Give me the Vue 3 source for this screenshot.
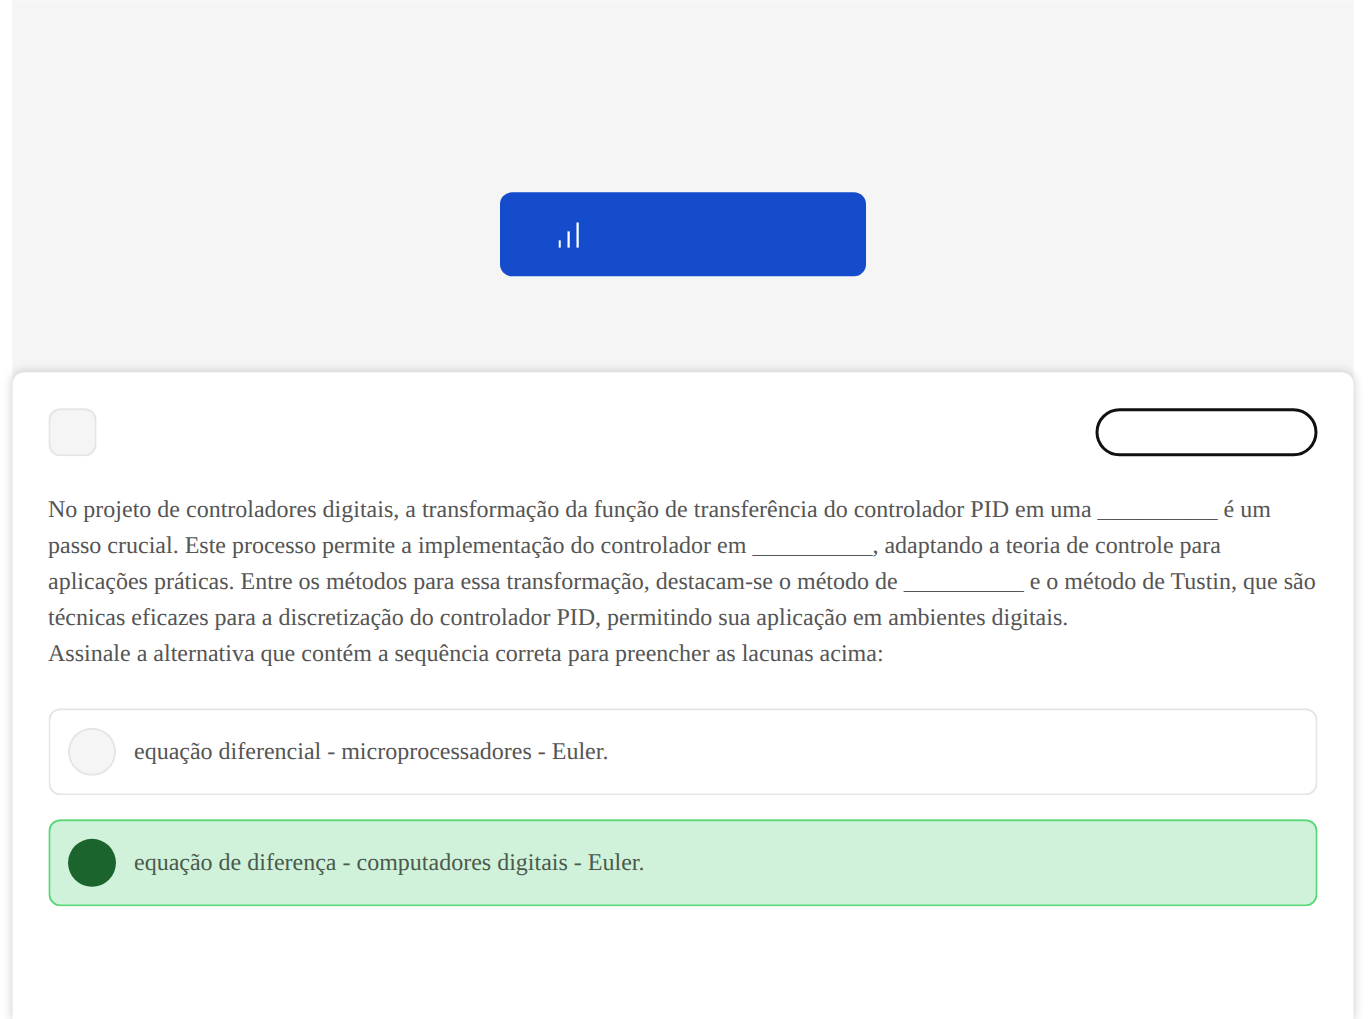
<script setup>
const paragraphLines = [
  'No projeto de controladores digitais, a transformação da função de transferência do controlador PID em uma __________ é um passo crucial. Este processo permite a implementação do controlador em __________, adaptando a teoria de controle para aplicações práticas. Entre os métodos para essa transformação, destacam-se o método de __________ e o método de Tustin, que são técnicas eficazes para a discretização do controlador PID, permitindo sua aplicação em ambientes digitais.',
  'Assinale a alternativa que contém a sequência correta para preencher as lacunas acima:'
]
const options = [
  { text: 'equação diferencial - microprocessadores - Euler.', correct: false },
  { text: 'equação de diferença - computadores digitais - Euler.', correct: true }
]
</script>

<template>
  <div class="viewport">
    <div class="page">
      <main class="shell">
        <section class="hero">
          <button class="hero-button" type="button" aria-label="Nível">
            <svg class="bars" width="14" height="17" viewBox="0 0 14 17" aria-hidden="true">
              <rect x="0" y="12" width="1.5" height="5" fill="#fff" />
              <rect x="6" y="6" width="1.5" height="11" fill="#fff" />
              <rect x="12" y="0" width="1.5" height="17" fill="#fff" />
            </svg>
          </button>
        </section>
        <section class="card">
          <header class="card-head">
            <div class="square"></div>
            <div class="pill"></div>
          </header>
          <div class="question">
            <p v-for="line in paragraphLines" :key="line">{{ line }}</p>
          </div>
          <div class="options">
            <div
              v-for="option in options"
              :key="option.text"
              class="option"
              :class="{ correct: option.correct }"
            >
              <span class="dot"></span>
              <span class="label">{{ option.text }}</span>
            </div>
          </div>
        </section>
      </main>
    </div>
  </div>
</template>

<style>
html, body { margin: 0; background: #fff; overflow: hidden; }
</style>

<style scoped>
.viewport {
  width: 1370px;
  height: 1019px;
  overflow: hidden;
}
.page {
  width: 913.33px;
  height: 680px;
  padding: 0 11.33px 0 8px;
  box-sizing: border-box;
  transform: translate(0.5px, 0.33px) scale(1.5);
  transform-origin: 0 0;
  font-family: "Liberation Serif", "Times New Roman", serif;
  text-rendering: geometricPrecision;
}
.shell {
  height: 100%;
  background: #f5f5f5;
  display: flex;
  flex-direction: column;
}
.hero {
  height: 248px;
  flex: none;
  display: flex;
  justify-content: center;
  padding-top: 128px;
  box-sizing: border-box;
  box-shadow: 0 -2px 0 #f5f5f5;
}
.hero-button {
  width: 244px;
  height: 56px;
  margin: 0;
  padding: 0 0 0 39px;
  border: 0;
  border-radius: 8px;
  background: #154ccb;
  display: flex;
  align-items: center;
}
.bars { display: block; }
.card {
  flex: 1;
  background: #fff;
  border-radius: 8px 8px 0 0;
  padding: 24px;
  box-shadow: 0 0 7px rgba(0, 0, 0, 0.2);
}
.card-head {
  display: flex;
  justify-content: space-between;
  align-items: center;
  margin-bottom: 24px;
}
.square {
  width: 32px;
  height: 32px;
  box-sizing: border-box;
  box-shadow: inset 0 0 0 1.2px #e5e5e5;
  border-radius: 8px;
  background: #f5f5f5;
}
.pill {
  width: 148px;
  height: 32px;
  box-sizing: border-box;
  border: 2px solid #111;
  border-radius: 16px;
  background: #fff;
}
.question {
  font-size: 16px;
  line-height: 24px;
  color: #555;
  padding-top: 0.67px;
  margin-bottom: 23.33px;
  margin-left: -0.33px;
  transform: translateY(-0.5px);
}
.question p { margin: 0; }
.options {
  display: flex;
  flex-direction: column;
  gap: 16px;
}
.option {
  display: flex;
  align-items: center;
  gap: 12px;
  padding: 13px;
  box-shadow: inset 0 0 0 1.2px #e5e5e5;
  border-radius: 8px;
  background: #fff;
  color: #555;
  font-size: 16px;
  line-height: 24px;
}
.label { padding-top: 1.34px; }
.dot {
  width: 32px;
  height: 32px;
  box-sizing: border-box;
  box-shadow: inset 0 0 0 1.2px #e5e5e5;
  border-radius: 50%;
  background: #f5f5f5;
  flex: none;
}
.option.correct {
  background: #d1f2da;
  box-shadow: inset 0 0 0 1.2px #5ad778;
  color: #4a5a4e;
}
.option.correct .dot {
  background: #1c642d;
  box-shadow: none;
}
</style>
